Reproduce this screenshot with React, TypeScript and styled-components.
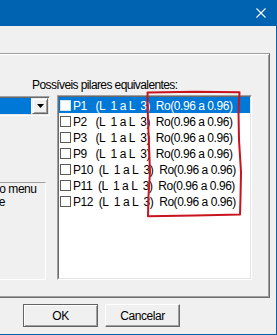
import styled, { createGlobalStyle } from 'styled-components';

interface Pilar {
    name: string;
    selected?: boolean;
}

const pilares: Pilar[] = [
    { name: 'P1', selected: true },
    { name: 'P2' },
    { name: 'P3' },
    { name: 'P9' },
    { name: 'P10' },
    { name: 'P11' },
    { name: 'P12' },
];

// the list is plain text padded with spaces, like the original listbox
const rowText = (name: string) =>
    `${name}${name.length === 2 ? '   ' : '  '}(L  1 a L  3)  Ro(0.96 a 0.96)`;

export default function App() {
    return (
        <>
            <GlobalStyle />
            <Window>
                <TitleBar>
                    <CloseIcon width="10" height="10" viewBox="0 0 10 10">
                        <path d="M0.5 0.5 L9.5 9.5 M9.5 0.5 L0.5 9.5" />
                    </CloseIcon>
                </TitleBar>
                <Content>
                    <Panel>
                        <Label>Possíveis pilares equivalentes:</Label>
                        <PanelRow>
                            <LeftColumn>
                                <Combo>
                                    <ComboField />
                                    <ComboButton>
                                        <svg width="7" height="4" viewBox="0 0 7 4">
                                            <path d="M0 0 H7 L3.5 4 Z" fill="#000" />
                                        </svg>
                                    </ComboButton>
                                </Combo>
                                <HintBox>
                                    <HintLine>no menu</HintLine>
                                    <HintLine>{'\u00a0\u00a0e'}</HintLine>
                                </HintBox>
                            </LeftColumn>
                            <ListOuter>
                                <ListInner>
                                    {pilares.map((p) => (
                                        <ListRow key={p.name} $selected={p.selected}>
                                            <CheckBox $selected={p.selected} />
                                            <RowText>{rowText(p.name)}</RowText>
                                        </ListRow>
                                    ))}
                                </ListInner>
                            </ListOuter>
                        </PanelRow>
                    </Panel>
                    <Footer>
                        <Button $default>OK</Button>
                        <Button>Cancelar</Button>
                    </Footer>
                </Content>
                <Annotation width="277" height="335" viewBox="0 0 277 335">
                    <path d="M147.5 92.5 L195 91.8 L239.5 92.3 L238.5 112 L239 140 L241 172 L240.5 198 L240 214.5 L195 215.6 L148 216.3 L148.5 196 L150 172 L148.8 140 L147.8 112 Z" />
                </Annotation>
            </Window>
        </>
    );
}

const GlobalStyle = createGlobalStyle`
    html, body {
        margin: 0;
        padding: 0;
        overflow: hidden;
        background: #f0f0f0;
    }
    body {
        font-family: "Liberation Sans", Arial, sans-serif;
        font-size: 12px;
        letter-spacing: -0.45px;
        color: #000;
    }
`;
const Window = styled.div`
    position: relative;
    width: 277px;
    height: 335px;
    box-sizing: border-box;
    overflow: hidden;
    background: #f0f0f0;
    border-right: 1px solid #0063b1;
    border-bottom: 1px solid #0063b1;
`;
const TitleBar = styled.div`
    height: 26px;
    background: #0063b1;
    display: flex;
    justify-content: flex-end;
    align-items: center;
    padding-right: 10px;
`;
const CloseIcon = styled.svg`
    stroke: #fff;
    stroke-width: 1.1;
    fill: none;
`;
const Content = styled.div`
    padding-top: 27px;
`;
const Panel = styled.div`
    box-sizing: border-box;
    width: 300px;
    height: 245px;
    margin-left: -30px;
    padding: 25px 17px 0 9px;
    border: 1px solid;
    border-color: #a0a0a0 #6d6d6d #6d6d6d #a0a0a0;
    box-shadow: inset 0 1px 0 #fff, inset -1px -1px 0 #a0a0a0;
`;
const Label = styled.div`
    margin-left: 52px;
    height: 13px;
    line-height: 13px;
    letter-spacing: -0.6px;
    white-space: nowrap;
`;
const PanelRow = styled.div`
    display: flex;
    gap: 7px;
    margin-top: 3px;
`;
const LeftColumn = styled.div`
    width: 70px;
    display: flex;
    flex-direction: column;
`;
const Combo = styled.div`
    margin-top: 1px;
    height: 20px;
    box-sizing: border-box;
    display: flex;
    background: #fff;
    border: 1px solid;
    border-color: #a0a0a0 #fff #fff #a0a0a0;
    box-shadow: inset 1px 1px 0 #696969, inset -1px -1px 0 #e3e3e3;
    padding: 1px;
`;
const ComboField = styled.div`
    flex: 1;
    background: #0078d7;
    margin-right: 1px;
`;
const ComboButton = styled.div`
    width: 16px;
    box-sizing: border-box;
    display: flex;
    align-items: center;
    justify-content: center;
    background: #f0f0f0;
    border: 1px solid;
    border-color: #f0f0f0 #696969 #696969 #f0f0f0;
    box-shadow: inset 1px 1px 0 #fff, inset -1px -1px 0 #a0a0a0;
`;
const HintBox = styled.div`
    margin-top: 66px;
    margin-right: 4px;
    height: 98px;
    box-sizing: border-box;
    padding-left: 12px;
    border: 1px solid;
    border-color: #a0a0a0 #fff #fff #a0a0a0;
    white-space: nowrap;
`;
const HintLine = styled.div`
    line-height: 13px;
`;
const ListOuter = styled.div`
    width: 195px;
    height: 185px;
    box-sizing: border-box;
    border: 1px solid;
    border-color: #a0a0a0 #fff #fff #a0a0a0;
`;
const ListInner = styled.div`
    height: 100%;
    box-sizing: border-box;
    background: #fff;
    border: 1px solid;
    border-color: #696969 #e3e3e3 #e3e3e3 #696969;
`;
const ListRow = styled.div<{ $selected?: boolean }>`
    height: 16px;
    display: flex;
    align-items: center;
    padding-left: 1px;
    background: ${(p) => (p.$selected ? '#0078d7' : 'transparent')};
    color: ${(p) => (p.$selected ? '#fff' : '#000')};
`;
const CheckBox = styled.span<{ $selected?: boolean }>`
    width: 11px;
    height: 11px;
    box-sizing: border-box;
    margin-right: 2px;
    margin-top: 1px;
    flex-shrink: 0;
    background: #fff;
    border: 1px solid ${(p) => (p.$selected ? '#cfe3f5' : '#5a5a5a')};
`;
const RowText = styled.span`
    white-space: pre;
    line-height: 16px;
    margin-top: 2px;
`;
const Footer = styled.div`
    display: flex;
    gap: 7px;
    margin-top: 6px;
    padding-left: 23px;
`;
const Button = styled.div<{ $default?: boolean }>`
    width: 75px;
    height: 23px;
    box-sizing: border-box;
    display: flex;
    align-items: center;
    justify-content: center;
    background: #f0f0f0;
    border: 1px solid;
    border-color: ${(p) => (p.$default ? '#646464' : '#fff #696969 #696969 #fff')};
    box-shadow: ${(p) =>
        p.$default
            ? 'inset 1px 1px 0 #fff, inset -1px -1px 0 #a0a0a0'
            : 'inset -1px -1px 0 #a0a0a0'};
`;
const Annotation = styled.svg`
    position: absolute;
    left: 0;
    top: 0;
    pointer-events: none;
    fill: none;
    stroke: #c8141e;
    stroke-width: 2;
    stroke-linejoin: round;
`;
